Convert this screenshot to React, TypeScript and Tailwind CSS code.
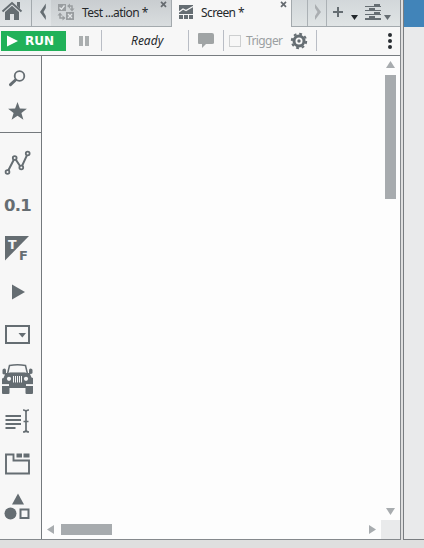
import React from "react";

const ink = "#656d72";

function Cell({ h, children }: { h: number; children: React.ReactNode }) {
  return (
    <svg width="41" height={h} viewBox={`0 0 41 ${h}`} className="block shrink-0" fill={ink}>
      {children}
    </svg>
  );
}

function Close() {
  return (
    <svg width="7" height="7" viewBox="0 0 7 7" className="mt-px shrink-0" stroke="#666b70" strokeWidth="1.7">
      <path d="M1 .8 6 5.800M6 .8 1 5.800" />
    </svg>
  );
}

function TabBar() {
  return (
    <div className="flex h-[27px] shrink-0 text-[12px] text-[#25282b]">
      <div className="w-8 shrink-0 border-r border-b border-[#a3a9ad] bg-linear-to-b from-[#d5dadd] to-[#e2e5e7]">
        <svg width="31" height="26" viewBox="0 0 31 26">
          <path d="M2.500 11.500 12 3 21.500 11.500" fill="none" stroke={ink} strokeWidth="2" />
          <path d="M17 2h3v7l-3-3zM5 12l7-6.300 7 6.300v8h-5v-6h-4v6H5z" fill={ink} />
        </svg>
      </div>
      <div className="w-[19px] shrink-0 border-b border-[#a3a9ad] bg-linear-to-b from-[#d5dadd] to-[#e2e5e7]">
        <svg width="19" height="26" viewBox="0 0 19 26">
          <path d="M13.800 3.500v4.500L11.500 12l2.300 4v4L8 12z" fill={ink} />
        </svg>
      </div>
      <div className="flex w-[121px] shrink-0 border-r border-b border-[#a3a9ad] bg-linear-to-b from-[#c9cdd0] to-[#d9dddf]">
        <svg width="31" height="26" viewBox="0 0 31 26" fill="#999da0">
          <path d="M7 4h8v7H7zM15 12h8v8h-8z" />
          <path d="m8.500 7.500 2 1.700L13.500 5.500M17 14l4 4m0-4-4 4" stroke="#e2e5e7" strokeWidth="1.300" fill="none" />
          <path d="M17.500 6H21V9M13.500 18H9v-3" fill="none" stroke="#999da0" strokeWidth="1.500" />
          <path d="m19 3.500-3 2.500 3 2.500zM18.500 8.500h5L21 11.500zM6.500 15.500h5L9 12.500zM11.500 15.500l3 2.500-3 2.500z" />
        </svg>
        <span className="w-[78px] pt-[4px] tracking-[-0.55px] whitespace-nowrap">Test ...ation *</span>
        <Close />
      </div>
      <div className="flex w-[119px] shrink-0 bg-[#f7f7f7]">
        <svg width="29" height="26" viewBox="0 0 29 26" fill={ink}>
          <path d="M7 5h14v9H7zM7 15h4v4H7zM12 15h4v4h-4zM17 15h4v4h-4z" />
          <path d="m7 12 4-3 3 1.500L21 6.500" stroke="#f7f7f7" strokeWidth="1.200" fill="none" />
        </svg>
        <span className="w-[79px] pt-[4px] tracking-[-0.6px] whitespace-nowrap">Screen *</span>
        <Close />
      </div>
      <div className="flex w-[109px] shrink-0 border-b border-l border-[#a3a9ad] bg-linear-to-b from-[#d2d7da] to-[#e0e4e5]">
        <div className="w-4 border-r border-[#abb1b5]" />
        <div className="w-[19px] border-r border-[#abb1b5]">
          <svg width="18" height="26" viewBox="0 0 18 26">
            <path d="M7 4v4l2.500 4L7 16v4l6-8z" fill="#aaaeb1" />
          </svg>
        </div>
        <svg width="73" height="26" viewBox="0 0 73 26" fill={ink}>
          <path d="M6 11h4V7h2v4h4v2h-4v4h-2v-4H6z" />
          <path d="M24 15h7l-3.500 5z" fill="#22272b" />
          <path d="M57 15h7l-3.500 5z" />
          <path d="M47 4h6v3h-6zM42 8h6v3h-6zM47 12h6v3h-6zM42 16h6v3h-6z" />
          <path d="M38 6h16v1H38zM38 10h16v1H38zM38 14h16v1H38zM38 18h16v2H38z" />
        </svg>
      </div>
    </div>
  );
}

function Toolbar() {
  return (
    <div className="flex h-[29px] shrink-0 items-center border-b border-[#777c80] bg-[#f7f7f7] text-[12px]">
      <div className="ml-px flex h-5 w-[65px] shrink-0 items-center bg-[#21b159]">
        <svg width="24" height="20" viewBox="0 0 24 20">
          <path d="M6 4.500 17 10 6 15.500z" fill="#fff" />
        </svg>
        <span className="font-['DejaVu_Sans',sans-serif] text-[12px] leading-5 font-bold text-white">RUN</span>
      </div>
      <svg width="36" height="28" viewBox="0 0 36 28" className="shrink-0">
        <path d="M13 9h4v10h-4zM19 9h4v10h-4z" fill="#aaaeaf" />
        <path d="M35 3h1v21h-1z" fill="#b9bdc5" />
      </svg>
      <span className="w-[86px] shrink-0 pl-[29px] text-[#25282b] italic">Ready</span>
      <svg width="36" height="28" viewBox="0 0 36 28" className="shrink-0">
        <path d="M0 3h1v21H0zM35 3h1v21h-1z" fill="#b9bdc5" />
        <path d="M11 6h13q2 0 2 2v8q0 1-2 1h-6l-4 4v-4h-3q-1 0-1-1V7q0-1 1-1z" fill="#a0a4a5" />
      </svg>
      <div className="ml-[5px] size-3 shrink-0 border border-[#cdcfd0]" />
      <span className="w-11 shrink-0 pl-[5px] tracking-[-0.6px] text-[#9b9fa2]">Trigger</span>
      <svg width="33" height="28" viewBox="0 0 33 28" className="shrink-0">
        <g fill="none" stroke={ink}>
          <circle cx="14" cy="14" r="5" strokeWidth="3" />
          <circle cx="14" cy="14" r="7.200" strokeWidth="2" strokeDasharray="2.830 2.825" />
        </g>
        <circle cx="14" cy="14" r="1.700" fill={ink} />
        <path d="M31 3h1v21h-1z" fill="#b9bdc5" />
      </svg>
      <svg width="13" height="28" viewBox="0 0 13 28" className="mr-[4px] ml-auto shrink-0" fill="#292e32">
        <circle cx="7" cy="8" r="2" />
        <circle cx="7" cy="14" r="2" />
        <circle cx="7" cy="20" r="2" />
      </svg>
    </div>
  );
}

function Sidebar() {
  return (
    <div className="flex w-[42px] shrink-0 flex-col border-r border-[#74797d] bg-[#f7f7f7]">
      <div className="flex h-[77px] shrink-0 flex-col border-b border-[#74797d]">
        <Cell h={39}>
          <circle cx="19.500" cy="20" r="4.800" fill="none" stroke={ink} strokeWidth="1.800" />
          <path d="m15.500 24-5 4.700" stroke={ink} strokeWidth="3" strokeLinecap="round" />
        </Cell>
        <Cell h={37}>
          <path d="m17.500 7 2.400 6.500 7 .2-5.500 4.200 2 6.800-5.900-4-5.900 4 2-6.800-5.500-4.200 7-.2z" />
        </Cell>
      </div>
      <div className="flex flex-col pt-2">
        <Cell h={43}>
          <path d="m7.500 31 7.200-14 6.500 9.700 6.500-14" fill="none" stroke={ink} strokeWidth="2" />
          <g fill="#f7f7f7" stroke={ink} strokeWidth="1.800">
            <circle cx="7.500" cy="31" r="1.900" />
            <circle cx="14.700" cy="17" r="1.900" />
            <circle cx="21.300" cy="26.500" r="1.900" />
            <circle cx="27.700" cy="12.500" r="1.900" />
          </g>
        </Cell>
        <div className="h-[43px] pt-[10px] pl-[4px] font-['DejaVu_Sans',sans-serif] text-[16.5px] leading-6 font-bold tracking-[-0.7px] text-[#656d72]">0.1</div>
        <Cell h={43}>
          <path d="M5 9h24L5 33.500z" />
          <text x="8" y="22" fontSize="12.500" fontWeight="bold" fontFamily="DejaVu Sans, sans-serif" fill="#f7f7f7">T</text>
          <text x="19" y="33" fontSize="13" fontWeight="bold" fontFamily="DejaVu Sans, sans-serif">F</text>
        </Cell>
        <Cell h={43}><path d="m12 14.500 13 7.500-13 7.500z" /></Cell>
        <Cell h={43}>
          <path d="M6 13h23v17H6z" fill="none" stroke={ink} strokeWidth="2" />
          <path d="M18.500 20h7.500L22.300 24.500z" />
        </Cell>
        <Cell h={43}>
          <path d="M7.500 18 9.500 9.500Q17.500 8 25.500 9.500l2 8.500" fill="none" stroke={ink} strokeWidth="1.500" />
          <path d="M9.500 16h16l.5 1.500H9z" fill="#a3a8aa" />
          <path d="M2.500 14q0-1.500 2-1.500 1.500 0 1.500 2V17h23v-2.500q0-2 1.500-2 2 0 2 1.500v3q0 1-2.500 1l1.500 3.500 1.500.5v6.500h-31V22.500l1.500-.5 1.500-3.500q-2.500 0-2.500-1zM2 30h7.500v7q0 1-1 1h-5.500q-1 0-1-1zM25.500 30H33v7q0 1-1 1h-5.500q-1 0-1-1zM9 28h17v4H9z" />
          <g fill="#f7f7f7">
            <circle cx="9" cy="22.800" r="2.100" />
            <circle cx="26" cy="22.800" r="2.100" />
            <path d="M13 20h1v6.500h-1zM15 20h1v6.500h-1zM17 20h1v6.500h-1zM19 20h1v6.500h-1zM21 20h1v6.500h-1zM2 28.200h7v.8H2zM26 28.200h7v.8h-7z" />
          </g>
        </Cell>
        <Cell h={43}>
          <path d="M5.500 16h15.500v2H5.500zM5.500 20h15.500v2H5.500zM5.500 24h15.500v2H5.500zM5.500 28h10v2h-10z" />
          <path d="M23 11q3 0 3 2 0-2 3-2M26 12v20M23 33q3 0 3-2 0 2 3 2M23.500 22.500h5" fill="none" stroke={ink} strokeWidth="1.700" />
        </Cell>
        <Cell h={43}>
          <path d="M6 12.500h7.500v6H29v13H6z" fill="none" stroke={ink} strokeWidth="1.900" />
          <path d="M16.500 11.500H22V15.500h-5.500zM23.500 11.500H29.500V15.500h-6z" />
        </Cell>
        <Cell h={43}>
          <path d="m18 8.500 6 11H12z" />
          <circle cx="10.500" cy="28.500" r="6" />
          <path d="M20.500 24.500h8v8.500h-8z" fill="none" stroke={ink} strokeWidth="2" />
        </Cell>
      </div>
    </div>
  );
}

function Canvas() {
  return (
    <div className="flex min-w-0 flex-1 flex-col bg-[#fdfdfd]">
      <div className="flex flex-1 justify-end">
        <div className="flex w-[19px] flex-col items-center">
          <svg width="19" height="19" viewBox="0 0 19 19"><path d="m9.500 5 4.500 7H5z" fill="#a8acaf" /></svg>
          <div className="h-[124px] w-[11px] bg-[#a7abae]" />
          <svg width="19" height="19" viewBox="0 0 19 19" className="mt-auto"><path d="M5 7h9l-4.500 7z" fill="#a8acaf" /></svg>
        </div>
      </div>
      <div className="flex h-[19px] items-center">
        <svg width="19" height="19" viewBox="0 0 19 19"><path d="M12 5v9L5 9.500z" fill="#a8acaf" /></svg>
        <div className="h-[11px] w-[51px] bg-[#a7abae]" />
        <svg width="19" height="19" viewBox="0 0 19 19" className="ml-auto"><path d="M7 5v9l7-4.500z" fill="#a8acaf" /></svg>
        <div className="h-[19px] w-[19px] bg-[#e9eaeb]" />
      </div>
    </div>
  );
}

export default function App() {
  return (
    <div className="flex h-[548px] w-[424px] flex-col overflow-hidden bg-[#dfdfdf] font-['Noto_Sans','Open_Sans',sans-serif]">
      <div className="flex h-[540px] shrink-0 gap-[2px]">
        <div className="flex w-[401px] shrink-0 flex-col border-r border-b border-[#85898d]">
          <TabBar />
          <Toolbar />
          <div className="flex min-h-0 flex-1"><Sidebar /><Canvas /></div>
        </div>
        <div className="flex w-[21px] shrink-0 flex-col border-b border-l border-[#797d81] bg-[#e9eaeb]">
          <div className="h-[27px] bg-[#4184b9]" />
        </div>
      </div>
    </div>
  );
}
